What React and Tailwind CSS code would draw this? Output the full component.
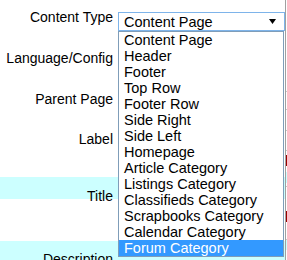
const options = [
  "Content Page",
  "Header",
  "Footer",
  "Top Row",
  "Footer Row",
  "Side Right",
  "Side Left",
  "Homepage",
  "Article Category",
  "Listings Category",
  "Classifieds Category",
  "Scrapbooks Category",
  "Calendar Category",
  "Forum Category",
];

function Label({ text, className }) {
  return (
    <div className={`w-[113px] text-right text-[14px] leading-[16px] text-black ${className}`}>
      {text}
    </div>
  );
}

export default function App() {
  return (
    <div
      className="relative h-[260px] w-[287px] overflow-hidden bg-white"
      style={{ fontFamily: '"Liberation Sans", Arial, sans-serif' }}
    >
      <div className="flex">
        {/* label column */}
        <div className="flex w-[285px] flex-col">
          <div className="h-[38px] pt-[9px]">
            <Label text="Content Type" />
          </div>
          <div className="h-[40px] pt-[12px]">
            <Label text="Language/Config" />
          </div>
          <div className="h-[42px] pt-[13px]">
            <Label text="Parent Page" />
          </div>
          <div className="h-[42px] pt-[11px]">
            <Label text="Label" />
          </div>
          <div className="h-[15px]" />
          <div className="h-[22px] bg-[#ccffff] pt-[11px]">
            <Label text="Title" />
          </div>
          <div className="h-[42px]" />
          <div className="h-[30px] bg-[#ccffff] pt-[10px]">
            <Label text="Description" />
          </div>
        </div>

        {/* sliver of the form fields behind the list */}
        <div className="flex w-[2px] flex-col border-l border-[#a0a0a0]">
          <div className="h-[92px] border-b border-[#c8c8c8]" />
          <div className="h-[18px] border-b border-[#c8c8c8]" />
          <div className="h-[21px] border-b border-[#c8c8c8]" />
          <div className="h-[20px] border-b border-[#c8c8c8]" />
          <div className="h-[4px]" />
          <div className="h-[11px] bg-[#990000]" />
          <div className="h-[6px]" />
          <div className="h-[11px] bg-[#ccffff]" />
          <div className="h-[4px] border-b border-[#c8c8c8]" />
          <div className="h-[24px]" />
          <div className="h-[11px] bg-[#990000]" />
          <div className="h-[18px] border-b border-[#c8c8c8]" />
          <div className="h-[10px] bg-[#ccffff]" />
        </div>
      </div>

      {/* open select */}
      <div className="absolute left-[118px] top-[12px] flex h-[19px] w-[167px] items-center justify-between border border-[#7eb4ea] bg-white pl-[5px] pr-[8px] text-[14.5px] leading-[16px] text-black">
        <span>Content Page</span>
        <svg width="7" height="5" viewBox="0 0 7 5">
          <polygon points="0,0 7,0 3.5,5" fill="#000" />
        </svg>
      </div>

      <ul className="absolute left-[118px] top-[31px] w-[166px] border border-[#7f9db9] bg-white text-[14.5px] leading-[16px] text-black">
        {options.map((o, i) => (
          <li
            key={o}
            className={`h-[16px] whitespace-nowrap pl-[5px] ${
              i === options.length - 1 ? "bg-[#3399ff] text-white" : ""
            }`}
          >
            {o}
          </li>
        ))}
      </ul>
    </div>
  );
}
